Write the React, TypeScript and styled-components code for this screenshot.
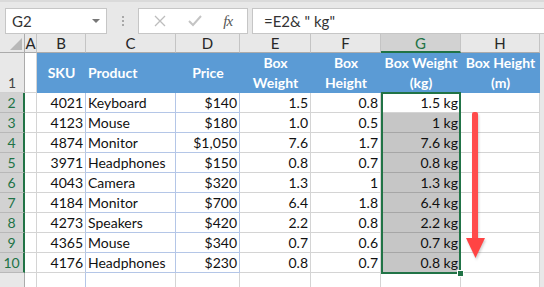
import { Fragment } from "react";
import styled, { createGlobalStyle } from "styled-components";

const GlobalStyle = createGlobalStyle`
  html, body {
    margin: 0;
    padding: 0;
    background: #ffffff;
    overflow: hidden;
  }
  body {
    font-family: Lato, "Open Sans", sans-serif;
    width: 544px;
    height: 287px;
  }
`;

type row = {
  sku: number;
  product: string;
  price: string;
  weight: string;
  height: string;
  label: string;
};

const rows: row[] = [
  { sku: 4021, product: "Keyboard", price: "$140", weight: "1.5", height: "0.8", label: "1.5 kg" },
  { sku: 4123, product: "Mouse", price: "$180", weight: "1.0", height: "0.5", label: "1 kg" },
  { sku: 4874, product: "Monitor", price: "$1,050", weight: "7.6", height: "1.7", label: "7.6 kg" },
  { sku: 3971, product: "Headphones", price: "$150", weight: "0.8", height: "0.7", label: "0.8 kg" },
  { sku: 4043, product: "Camera", price: "$320", weight: "1.3", height: "1", label: "1.3 kg" },
  { sku: 4184, product: "Monitor", price: "$700", weight: "6.4", height: "1.8", label: "6.4 kg" },
  { sku: 4273, product: "Speakers", price: "$420", weight: "2.2", height: "0.8", label: "2.2 kg" },
  { sku: 4365, product: "Mouse", price: "$340", weight: "0.7", height: "0.6", label: "0.7 kg" },
  { sku: 4176, product: "Headphones", price: "$230", weight: "0.8", height: "0.7", label: "0.8 kg" },
];

const columns = ["A", "B", "C", "D", "E", "F", "G", "H"];

const Page = styled.div`
  width: 544px;
  height: 287px;
  background: #e8e8e8;
  display: flex;
  flex-direction: column;
  overflow: hidden;
`;

const FormulaBar = styled.div`
  height: 44px;
  display: flex;
  align-items: flex-start;
  padding: 8px 0 0 5px;
  box-sizing: border-box;
  border-top: 2px solid #dadada;
`;

const NameBox = styled.div`
  width: 102px;
  height: 26px;
  margin-top: -2px;
  box-sizing: border-box;
  background: #fff;
  border: 1px solid #c6c6c6;
  display: flex;
  align-items: center;
  justify-content: space-between;
  padding: 0 6px 0 6px;
  font-size: 15px;
  color: #333;
`;

const Caret = styled.span`
  width: 0;
  height: 0;
  border-left: 4px solid transparent;
  border-right: 4px solid transparent;
  border-top: 4px solid #777;
`;

const Grip = styled.div`
  width: 31px;
  height: 26px;
  margin-top: -2px;
  display: flex;
  flex-direction: column;
  align-items: center;
  justify-content: center;
  gap: 2px;

  span {
    width: 2px;
    height: 2px;
    background: #a8a8a8;
  }
`;

const ButtonBox = styled.div`
  width: 110px;
  height: 26px;
  margin-top: -2px;
  box-sizing: border-box;
  background: #fff;
  border: 1px solid #c6c6c6;
  display: flex;
  align-items: center;
  justify-content: space-around;
  padding: 0 4px;
`;

const Fx = styled.span`
  font-family: "Liberation Serif", serif;
  font-style: italic;
  font-size: 15px;
  color: #555;
  letter-spacing: -1px;
`;

const FormulaInput = styled.div`
  flex: 1;
  height: 26px;
  margin: -2px 0 0 4px;
  box-sizing: border-box;
  background: #fff;
  border: 1px solid #c6c6c6;
  border-right: none;
  display: flex;
  align-items: center;
  padding-left: 11px;
  font-size: 15px;
  color: #333;
  white-space: pre;
`;

const SheetWrap = styled.div`
  position: relative;
  flex: 1;
`;

const Sheet = styled.div`
  display: grid;
  grid-template-columns: 25px 12px 49px 90px 64px 71px 70px 80px 79px 4px;
  grid-template-rows: 19px 40px repeat(9, 20px) 20px;
  font-size: 14px;
`;

const Corner = styled.div`
  background: #e8e8e8;
  border-right: 1px solid #ababab;
  border-bottom: 1px solid #ababab;
  position: relative;
  overflow: hidden;

  &::after {
    content: "";
    position: absolute;
    right: 2px;
    bottom: 2px;
    border-left: 12px solid transparent;
    border-bottom: 12px solid #b8b8b8;
  }
`;

const ColHead = styled.div<{ active?: boolean }>`
  background: ${(p) => (p.active ? "#d2d2d2" : "#e8e8e8")};
  color: ${(p) => (p.active ? "#217346" : "#262626")};
  border-right: 1px solid #c4c4c4;
  border-bottom: ${(p) => (p.active ? "2px solid #217346" : "1px solid #ababab")};
  display: flex;
  align-items: center;
  justify-content: center;
  font-size: 15px;
`;

const RowHead = styled.div<{ active?: boolean }>`
  background: ${(p) => (p.active ? "#d2d2d2" : "#e8e8e8")};
  color: ${(p) => (p.active ? "#217346" : "#444")};
  border-right: ${(p) => (p.active ? "2px solid #217346" : "1px solid #ababab")};
  border-bottom: 1px solid ${(p) => (p.active ? "#b8b8b8" : "#d0d0d0")};
  display: flex;
  align-items: flex-end;
  justify-content: center;
  padding-bottom: 1px;
  box-sizing: border-box;
  font-size: 14px;
  line-height: 17px;
`;

const Cell = styled.div<{ align?: "left" | "right"; tint?: boolean; edge?: boolean; fill?: boolean }>`
  background: ${(p) => (p.fill ? "#c6c6c6" : "#fff")};
  border-right: 1px solid ${(p) => (p.tint || p.edge ? "#b4c6e7" : "#d4d4d4")};
  border-bottom: 1px solid ${(p) => (p.fill ? "#a6a6a6" : p.tint ? "#b4c6e7" : "#d4d4d4")};
  display: flex;
  align-items: flex-end;
  justify-content: ${(p) => (p.align === "right" ? "flex-end" : "flex-start")};
  padding: 0 2px 1px 2px;
  box-sizing: border-box;
  color: #111;
  line-height: 17px;
  white-space: nowrap;
`;

const HeadCell = styled.div<{ align?: "left" | "center" }>`
  background: #5b9bd5;
  color: #fff;
  font-weight: 700;
  display: flex;
  align-items: center;
  justify-content: ${(p) => (p.align === "left" ? "flex-start" : "center")};
  text-align: center;
  padding: 0 2px;
  line-height: 20px;
  white-space: nowrap;
`;

const Selection = styled.div`
  position: absolute;
  left: 381px;
  top: 58px;
  width: 80px;
  height: 182px;
  box-sizing: border-box;
  border: 2px solid #217346;
  pointer-events: none;
  z-index: 2;
`;

const Handle = styled.div`
  position: absolute;
  right: -5px;
  bottom: -5px;
  width: 5px;
  height: 5px;
  background: #217346;
  border: 1px solid #fff;
`;

const Arrow = styled.svg`
  position: absolute;
  left: 462px;
  top: 76px;
  z-index: 3;
  filter: drop-shadow(1px 2px 1px rgba(0, 0, 0, 0.18));
`;

export default function App() {
  return (
    <Page>
      <GlobalStyle />
      <FormulaBar>
        <NameBox>
          G2
          <Caret />
        </NameBox>
        <Grip>
          <span />
          <span />
          <span />
        </Grip>
        <ButtonBox>
          <svg width="12" height="12" viewBox="0 0 12 12">
            <path d="M1 1 L11 11 M11 1 L1 11" stroke="#bdbdbd" strokeWidth="1.3" />
          </svg>
          <svg width="14" height="12" viewBox="0 0 14 12">
            <path d="M1 6 L5 10 L13 1" stroke="#c4c4c4" strokeWidth="2" fill="none" />
          </svg>
          <Fx>fx</Fx>
        </ButtonBox>
        <FormulaInput>=E2&amp; " kg"</FormulaInput>
      </FormulaBar>
      <SheetWrap>
        <Sheet>
          <Corner />
          {columns.map((c) => (
            <ColHead key={c} active={c === "G"}>
              {c}
            </ColHead>
          ))}
          <div />

          <RowHead>1</RowHead>
          <Cell />
          <HeadCell>SKU</HeadCell>
          <HeadCell align="left">Product</HeadCell>
          <HeadCell>Price</HeadCell>
          <HeadCell>
            Box
            <br />
            Weight
          </HeadCell>
          <HeadCell>
            Box
            <br />
            Height
          </HeadCell>
          <HeadCell>
            Box Weight
            <br />
            (kg)
          </HeadCell>
          <HeadCell>
            Box Height
            <br />
            (m)
          </HeadCell>
          <div />

          {rows.map((r, i) => (
            <Fragment key={r.sku}>
              <RowHead active>{i + 2}</RowHead>
              <Cell />
              <Cell align="right" edge>
                {r.sku}
              </Cell>
              <Cell tint>{r.product}</Cell>
              <Cell align="right" tint>
                {r.price}
              </Cell>
              <Cell align="right">{r.weight}</Cell>
              <Cell align="right">{r.height}</Cell>
              <Cell align="right" fill={i > 0}>
                {r.label}
              </Cell>
              <Cell />
              <div />
            </Fragment>
          ))}

          <RowHead />
          <Cell />
          <Cell edge />
          <Cell />
          <Cell />
          <Cell />
          <Cell />
          <Cell />
          <Cell />
          <div />
        </Sheet>
        <Selection>
          <Handle />
        </Selection>
        <Arrow width="30" height="150" viewBox="0 0 30 150">
          <rect x="10" y="2" width="6" height="130" rx="2" fill="#ff4b4b" />
          <path d="M4 128 L23 128 L13.5 148 Z" fill="#ff4444" />
        </Arrow>
      </SheetWrap>
    </Page>
  );
}
